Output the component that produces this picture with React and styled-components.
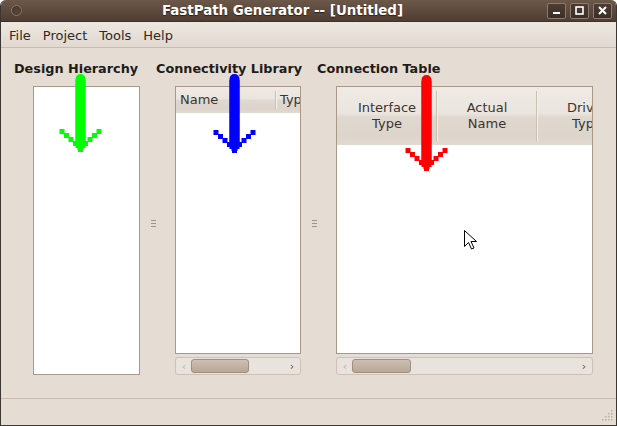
import styled, { createGlobalStyle } from "styled-components";

const GlobalStyle = createGlobalStyle`
  html, body {
    margin: 0;
    padding: 0;
    background: #ffffff;
  }
  body {
    font-family: "DejaVu Sans", "Liberation Sans", sans-serif;
  }
`;

const Window = styled.div`
  position: relative;
  box-sizing: border-box;
  width: 617px;
  height: 426px;
  display: flex;
  flex-direction: column;
  background: #e5ddd3;
  border: 1px solid #3b3632;
  border-top: none;
  border-radius: 6px 6px 0 0;
  overflow: hidden;
`;

const TitleBar = styled.div`
  height: 21px;
  flex: none;
  display: flex;
  align-items: center;
  padding: 0 4px 0 10px;
  background: linear-gradient(#6c5849, #4f3d32);
  border-bottom: 1px solid #3e3129;
`;

const WindowMenuDot = styled.div`
  width: 9px;
  height: 9px;
  border-radius: 50%;
  border: 1px solid #8a776a;
  background: radial-gradient(circle at 60% 65%, #5a473b, #3f3129);
`;

const Title = styled.div`
  flex: 1;
  text-align: center;
  color: #ffffff;
  font-weight: bold;
  font-size: 13.4px;
  text-shadow: 0 1px 1px #2a1f19;
  padding-right: 4px;
`;

const TitleButtons = styled.div`
  display: flex;
  gap: 4px;
`;

const TitleButton = styled.div`
  width: 19px;
  height: 16px;
  box-sizing: border-box;
  border: 1px solid #8c7b6f;
  border-radius: 2px;
  background: linear-gradient(#4d3c32, #3b2e26);
  display: flex;
  align-items: center;
  justify-content: center;
`;

const MenuBar = styled.div`
  height: 26px;
  flex: none;
  display: flex;
  align-items: center;
  padding: 1px 0 0 2px;
  box-sizing: border-box;
  background: linear-gradient(#ece7e1, #e1d9d0);
  border-bottom: 1px solid #c9bcaf;
`;

const MenuItem = styled.span`
  font-size: 13px;
  color: #2e2a27;
  padding: 0 6px;
`;

const Main = styled.div`
  flex: 1;
  display: flex;
  min-height: 0;
  padding-left: 13px;
`;

const Column = styled.div`
  width: ${(p) => p.$width}px;
  flex: none;
  display: flex;
  flex-direction: column;
  padding: 13px 0 23px;
  box-sizing: border-box;
`;

const Label = styled.div`
  height: 16px;
  line-height: 16px;
  font-size: 12.8px;
  font-weight: bold;
  color: #1e1b19;
  white-space: nowrap;
  margin-bottom: 9px;
`;

const Body = styled.div`
  flex: 1;
  margin-left: 19px;
  width: ${(p) => p.$width}px;
  display: flex;
  flex-direction: column;
  gap: 3px;
`;

const ListBox = styled.div`
  flex: 1;
  box-sizing: border-box;
  background: #ffffff;
  border: 1px solid #a89888;
  overflow: hidden;
  display: flex;
  flex-direction: column;
`;

const Header = styled.div`
  height: ${(p) => p.$height}px;
  flex: none;
  display: flex;
  background: linear-gradient(
    #efeae5 0%,
    #ebe5df 45%,
    #e0d8cf 52%,
    #ddd4cb 85%,
    #e2dad2 100%
  );
`;

const HeaderCell = styled.div`
  width: ${(p) => p.$width}px;
  flex: none;
  box-sizing: border-box;
  display: flex;
  align-items: center;
  justify-content: ${(p) => (p.$center ? "center" : "flex-start")};
  text-align: center;
  padding: ${(p) => (p.$center ? "0" : "0 0 0 4px")};
  font-size: 13px;
  line-height: 16px;
  color: #3a3531;
  white-space: nowrap;
  position: relative;
  &::after {
    content: "";
    position: absolute;
    right: 0;
    top: 4px;
    bottom: 4px;
    width: 1px;
    background: #cbbfb3;
    box-shadow: 1px 0 0 #f4f0ec;
    display: ${(p) => (p.$last ? "none" : "block")};
  }
`;

const ScrollBar = styled.div`
  height: 18px;
  flex: none;
  box-sizing: border-box;
  border: 1px solid #cdc1b5;
  border-radius: 3px;
  background: #e9e3dd;
  display: flex;
  align-items: center;
  padding: 0 4px;
  gap: 3px;
`;

const ScrollArrow = styled.span`
  width: 8px;
  font-size: 11px;
  color: ${(p) => (p.$dim ? "#bcb0a4" : "#5b524b")};
  line-height: 1;
  text-align: center;
`;

const Thumb = styled.div`
  width: ${(p) => p.$width}px;
  height: 14px;
  box-sizing: border-box;
  border: 1px solid #9f8f81;
  border-radius: 3px;
  background: linear-gradient(#cdbfb2, #c2b3a5 50%, #b6a798);
`;

const Track = styled.div`
  flex: 1;
`;

const Splitter = styled.div`
  width: ${(p) => p.$width}px;
  flex: none;
  display: flex;
  flex-direction: column;
  align-items: flex-end;
  justify-content: center;
  gap: 2px;
  span {
    display: block;
    width: 5px;
    height: 1px;
    background: #a39482;
  }
`;

const StatusBar = styled.div`
  height: 24px;
  flex: none;
  border-top: 1px solid #cbbcad;
  display: flex;
  justify-content: flex-end;
  align-items: flex-end;
  padding: 0 2px 2px 0;
`;

const Overlay = styled.svg`
  position: absolute;
  left: 0;
  top: 0;
  pointer-events: none;
`;

function Arrow({ cx, top, tip, color }) {
  const squares = [];
  for (let i = 0; i < 5; i++) {
    squares.push([cx - 21 + 4.5 * i, tip - 23 + 4 * i]);
    squares.push([cx + 16 - 4.5 * i, tip - 23 + 4 * i]);
  }
  squares.push([cx - 2.5, tip - 5]);
  return (
    <g fill={color}>
      <rect x={cx - 5} y={top} width={10} height={tip - top - 4} rx={5} />
      <rect x={cx - 5} y={top + 6} width={10} height={tip - top - 10} />
      {squares.map(([x, y], i) => (
        <rect key={i} x={x} y={y} width={5} height={5} />
      ))}
    </g>
  );
}

function ResizeGrip() {
  const dots = [];
  for (let r = 0; r < 4; r++) {
    for (let c = 0; c <= r; c++) {
      dots.push([12 - c * 3, r * 3 + 2]);
    }
  }
  return (
    <svg width="15" height="15" viewBox="0 0 15 15">
      {dots.map(([x, y], i) => (
        <rect key={i} x={x} y={y} width="1.5" height="1.5" fill="#bfb2a4" />
      ))}
    </svg>
  );
}

function HScroll({ thumb }) {
  return (
    <ScrollBar>
      <ScrollArrow $dim>‹</ScrollArrow>
      <Thumb $width={thumb} />
      <Track />
      <ScrollArrow>›</ScrollArrow>
    </ScrollBar>
  );
}

function Handle() {
  return (
    <Splitter $width={5}>
      <span />
      <span />
      <span />
    </Splitter>
  );
}

export default function App() {
  return (
    <>
      <GlobalStyle />
      <Window>
        <TitleBar>
          <WindowMenuDot />
          <Title>FastPath Generator -- [Untitled]</Title>
          <TitleButtons>
            <TitleButton>
              <svg width="9" height="9" viewBox="0 0 9 9">
                <rect x="1" y="6" width="7" height="2" fill="#fff" />
              </svg>
            </TitleButton>
            <TitleButton>
              <svg width="9" height="9" viewBox="0 0 9 9">
                <rect x="1" y="1" width="7" height="7" fill="none" stroke="#fff" strokeWidth="1.6" />
              </svg>
            </TitleButton>
            <TitleButton>
              <svg width="9" height="9" viewBox="0 0 9 9">
                <path d="M1 1 L8 8 M8 1 L1 8" stroke="#fff" strokeWidth="2" />
              </svg>
            </TitleButton>
          </TitleButtons>
        </TitleBar>

        <MenuBar>
          <MenuItem>File</MenuItem>
          <MenuItem>Project</MenuItem>
          <MenuItem>Tools</MenuItem>
          <MenuItem>Help</MenuItem>
        </MenuBar>

        <Main>
          <Column $width={137}>
            <Label>Design Hierarchy</Label>
            <Body $width={107}>
              <ListBox />
            </Body>
          </Column>
          <Handle />
          <Column $width={156}>
            <Label>Connectivity Library</Label>
            <Body $width={126}>
              <ListBox>
                <Header $height={26}>
                  <HeaderCell $width={100}>Name</HeaderCell>
                  <HeaderCell $width={60} $last>
                    Type
                  </HeaderCell>
                </Header>
              </ListBox>
              <HScroll thumb={58} />
            </Body>
          </Column>
          <Handle />
          <Column $width={280}>
            <Label>Connection Table</Label>
            <Body $width={257}>
              <ListBox>
                <Header $height={58}>
                  <HeaderCell $width={100} $center>
                    Interface
                    <br />
                    Type
                  </HeaderCell>
                  <HeaderCell $width={100} $center>
                    Actual
                    <br />
                    Name
                  </HeaderCell>
                  <HeaderCell $width={100} $center $last>
                    Driver
                    <br />
                    Type
                  </HeaderCell>
                </Header>
              </ListBox>
              <HScroll thumb={59} />
            </Body>
          </Column>
        </Main>

        <StatusBar>
          <ResizeGrip />
        </StatusBar>

        <Overlay width="617" height="426" viewBox="0 0 617 426">
          <Arrow cx={79.5} top={74} tip={152} color="#00ff00" />
          <Arrow cx={233.5} top={74} tip={153} color="#0000ff" />
          <Arrow cx={425.5} top={75} tip={171} color="#ff0000" />
          <path
            d="M463.5 230.5 L463.5 246.5 L467.5 242.5 L470.5 249 L473 248 L470 241.5 L475.5 241.5 Z"
            fill="#ffffff"
            stroke="#000000"
            strokeWidth="1"
          />
        </Overlay>
      </Window>
    </>
  );
}
